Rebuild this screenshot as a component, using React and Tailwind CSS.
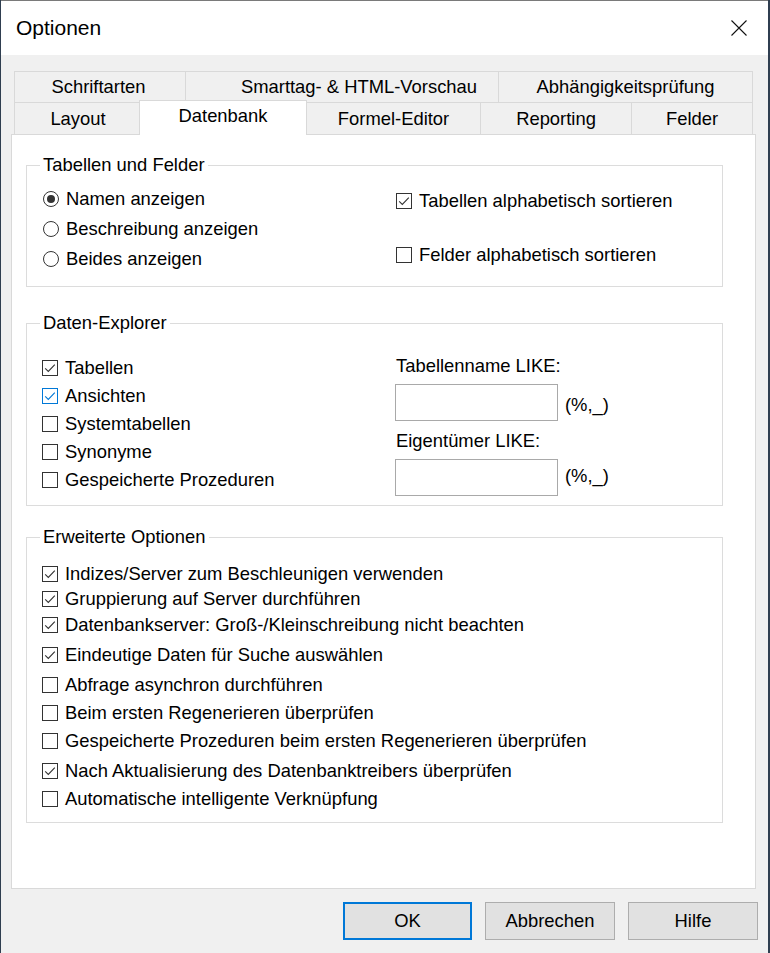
import React from "react";

const FONT = { fontFamily: '"Liberation Sans", Arial, sans-serif' };

function Check({ checked, blue }) {
  const c = blue ? "#0078d7" : "#333333";
  return (
    <svg width="16" height="16" viewBox="0 0 16 16" className="shrink-0">
      <rect x="0.5" y="0.5" width="15" height="15" fill="white" stroke={c} />
      {checked && (
        <path d="M3.2 8.3 L6.3 11.4 L12.8 4.6" fill="none" stroke={c} strokeWidth="1.1" />
      )}
    </svg>
  );
}

function Radio({ checked }) {
  return (
    <svg width="16" height="16" viewBox="0 0 16 16" className="shrink-0">
      <circle cx="8" cy="8" r="7.5" fill="white" stroke="#333333" />
      {checked && <circle cx="8" cy="8" r="4" fill="#333333" />}
    </svg>
  );
}

function CheckRow({ label, checked, blue, h = "h-[28px]", className = "" }) {
  return (
    <div className={"flex items-center gap-[7px] " + h + " " + className}>
      <Check checked={checked} blue={blue} />
      <span>{label}</span>
    </div>
  );
}

function RadioRow({ label, checked }) {
  return (
    <div className="flex items-center gap-[7px] h-[30px] pl-[1px]">
      <Radio checked={checked} />
      <span>{label}</span>
    </div>
  );
}

function Group({ title, className = "", children }) {
  return (
    <fieldset className={"ml-[14px] w-[697px] border border-[#dcdcdc] " + className}>
      <legend className="ml-[13px] px-[3px] leading-[20px]">{title}</legend>
      {children}
    </fieldset>
  );
}

export default function App() {
  const adv = [
    ["Indizes/Server zum Beschleunigen verwenden", true, "mt-0"],
    ["Gruppierung auf Server durchführen", true, "mt-[1px]"],
    ["Datenbankserver: Groß-/Kleinschreibung nicht beachten", true, "mt-[2px]"],
    ["Eindeutige Daten für Suche auswählen", true, "mt-[6px]"],
    ["Abfrage asynchron durchführen", false, "mt-[6px]"],
    ["Beim ersten Regenerieren überprüfen", false, "mt-[4px]"],
    ["Gespeicherte Prozeduren beim ersten Regenerieren überprüfen", false, "mt-[4px]"],
    ["Nach Aktualisierung des Datenbanktreibers überprüfen", true, "mt-[6px]"],
    ["Automatische intelligente Verknüpfung", false, "mt-[4px]"],
  ];

  return (
    <div
      style={FONT}
      className="w-[770px] h-[953px] flex flex-col bg-[#f0f0f0] text-black text-[18.4px] shadow-[inset_1px_0_0_#2f3e50,inset_-2px_0_0_#2f3e50,inset_0_1px_0_#7a7a7a]"
    >
      {/* Title bar */}
      <div className="h-[54px] bg-white flex items-center justify-between pl-[15px] pr-[21px] ml-[1px] mr-[2px] mt-[1px]">
        <span className="text-[21px]">Optionen</span>
        <svg width="16" height="16" viewBox="0 0 16 16">
          <path d="M0.5 0.5 L15.5 15.5 M15.5 0.5 L0.5 15.5" stroke="#111" strokeWidth="1.1" fill="none" />
        </svg>
      </div>

      {/* Tabs */}
      <div className="mt-[16px] ml-[14px] flex flex-col">
        <div className="flex h-[31px]">
          <div className="w-[171px] border-t border-l border-[#d9d9d9] flex items-center justify-center pr-[3px]">Schriftarten</div>
          <div className="w-[313px] border-t border-l border-[#d9d9d9] flex items-center justify-center pl-[34px]">Smarttag- &amp; HTML-Vorschau</div>
          <div className="w-[255px] border-t border-x border-[#d9d9d9] flex items-center justify-center">Abhängigkeitsprüfung</div>
        </div>
        <div className="flex items-start h-[32px]">
          <div className="w-[125px] h-full border-t border-l border-[#d9d9d9] flex items-center justify-center pl-[2px]">Layout</div>
          <div className="relative z-10 w-[168px] h-[35px] -mt-[2px] bg-white border-t border-x border-[#d9d9d9] flex items-center justify-center pb-[5px]">Datenbank</div>
          <div className="w-[173px] h-full border-t border-[#d9d9d9] flex items-center justify-center">Formel-Editor</div>
          <div className="w-[151px] h-full border-t border-l border-[#d9d9d9] flex items-center justify-center">Reporting</div>
          <div className="w-[122px] h-full border-t border-x border-[#d9d9d9] flex items-center justify-center">Felder</div>
        </div>
      </div>

      {/* Panel */}
      <div className="ml-[11px] w-[745px] h-[755px] bg-white border border-[#d9d9d9] pt-[20px]">
        <Group title="Tabellen und Felder" className="h-[132px]">
          <div className="flex pl-[15px]">
            <div className="w-[354px] pt-[9px]">
              <RadioRow label="Namen anzeigen" checked />
              <RadioRow label="Beschreibung anzeigen" />
              <RadioRow label="Beides anzeigen" />
            </div>
            <div className="pt-[11px] flex flex-col gap-[24px]">
              <CheckRow label="Tabellen alphabetisch sortieren" checked h="h-[30px]" />
              <CheckRow label="Felder alphabetisch sortieren" h="h-[30px]" />
            </div>
          </div>
        </Group>

        <Group title="Daten-Explorer" className="mt-[26px] h-[193px]">
          <div className="flex pl-[15px]">
            <div className="w-[354px] pt-[21px]">
              <CheckRow label="Tabellen" checked />
              <CheckRow label="Ansichten" checked blue />
              <CheckRow label="Systemtabellen" />
              <CheckRow label="Synonyme" />
              <CheckRow label="Gespeicherte Prozeduren" />
            </div>
            <div className="pt-[21px] flex flex-col">
              <div className="h-[24px] flex items-center">Tabellenname LIKE:</div>
              <div className="mt-[6px] flex items-center -ml-[1px]">
                <div className="w-[163px] h-[37px] border border-[#a9a9a9] bg-white" />
                <span className="ml-[7px] pt-[4px]">(%,_)</span>
              </div>
              <div className="mt-[8px] h-[24px] flex items-center">Eigentümer LIKE:</div>
              <div className="mt-[6px] flex items-center -ml-[1px]">
                <div className="w-[163px] h-[37px] border border-[#a9a9a9] bg-white" />
                <span className="ml-[7px] -mt-[4px]">(%,_)</span>
              </div>
            </div>
          </div>
        </Group>

        <Group title="Erweiterte Optionen" className="mt-[21px] h-[296px]">
          <div className="pl-[15px] pt-[15px] flex flex-col">
            {adv.map(([label, checked, mt]) => (
              <CheckRow key={label} label={label} checked={checked} h="h-[24px]" className={mt} />
            ))}
          </div>
        </Group>
      </div>

      {/* Buttons */}
      <div className="mt-[13px] flex justify-end gap-[13px] pr-[12px]">
        <button className="w-[129px] h-[38px] bg-[#e1e1e1] border-2 border-[#0078d7] flex items-center justify-center">OK</button>
        <button className="w-[130px] h-[38px] bg-[#e1e1e1] border border-[#adadad] flex items-center justify-center">Abbrechen</button>
        <button className="w-[130px] h-[38px] bg-[#e1e1e1] border border-[#adadad] flex items-center justify-center">Hilfe</button>
      </div>
    </div>
  );
}
